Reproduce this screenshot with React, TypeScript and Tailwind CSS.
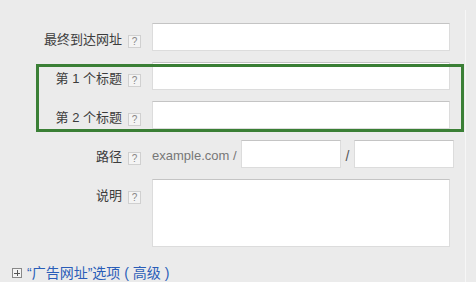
import React from "react";

const font = { fontFamily: '"Liberation Sans", "Noto Sans CJK SC", sans-serif' };

function Help() {
  return (
    <div className="ml-[6px] mt-[12px] w-[13px] h-[13px] shrink-0 border border-[#d0d0d0] bg-[#f4f4f4] text-[#888] text-[10px] leading-[11px] flex items-center justify-center">
      ?
    </div>
  );
}

function Label({ text }: { text: string }) {
  return (
    <div className="w-[122px] shrink-0 text-right pt-[9px] text-[13px] leading-[16px] text-[#3c3c3c] whitespace-pre">
      {text}
    </div>
  );
}

const inputCls =
  "bg-white border border-[#dcdcdc] border-t-[#c4c4c4] h-[28px] shrink-0";

export default function App() {
  return (
    <div
      className="relative w-[476px] h-[282px] bg-[#ebebeb] overflow-hidden"
      style={font}
    >
      <div className="absolute left-[465px] top-[10px] bottom-0 w-px bg-[#f6f6f6]" />
      <div className="flex flex-col gap-[11px] pt-[23px]">
        <div className="flex">
          <Label text="最终到达网址" />
          <Help />
          <div className={`${inputCls} ml-[11px] w-[298px]`} />
        </div>
        <div className="flex">
          <Label text="第 1 个标题" />
          <Help />
          <div className={`${inputCls} ml-[11px] w-[298px]`} />
        </div>
        <div className="flex">
          <Label text="第 2 个标题" />
          <Help />
          <div className={`${inputCls} ml-[11px] w-[298px]`} />
        </div>
        <div className="flex">
          <Label text="路径" />
          <Help />
          <div className="ml-[11px] pt-[8px] text-[13px] leading-[16px] text-[#777] w-[89px] shrink-0 whitespace-nowrap">
            example.com /
          </div>
          <div className={`${inputCls} w-[100px]`} />
          <div className="w-[13px] shrink-0 text-center pt-[8px] text-[14px] leading-[16px] text-[#555]">
            /
          </div>
          <div className={`${inputCls} w-[100px]`} />
        </div>
        <div className="flex">
          <Label text="说明" />
          <Help />
          <div className="bg-white border border-[#dcdcdc] border-t-[#c4c4c4] h-[68px] ml-[11px] w-[298px] shrink-0" />
        </div>
      </div>
      <div className="flex items-center mt-[17px] ml-[12px]">
        <div className="w-[10px] h-[10px] border border-[#888] relative shrink-0 bg-[#f4f4f4]">
          <div className="absolute left-[1px] right-[1px] top-[3.5px] h-px bg-[#555]" />
          <div className="absolute top-[1px] bottom-[1px] left-[3.5px] w-px bg-[#555]" />
        </div>
        <div className="ml-[5px] text-[14px] leading-[18px] text-[#2a5db8] whitespace-pre">
          “广告网址”选项 ( 高级 )
        </div>
      </div>
      <div className="absolute left-[36px] top-[64px] w-[428px] h-[68px] border-[3px] border-[#3a7f35]" />
    </div>
  );
}
